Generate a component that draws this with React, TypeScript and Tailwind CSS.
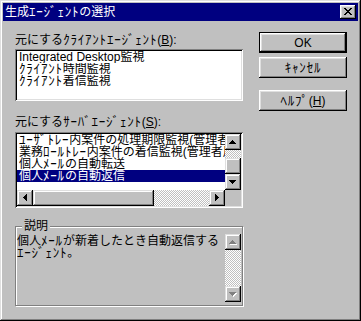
import React from 'react';

const raised =
  'shadow-[inset_-1px_-1px_#000,inset_1px_1px_#dfdfdf,inset_-2px_-2px_#808080,inset_2px_2px_#fff]';
const button =
  'shadow-[inset_-1px_-1px_#000,inset_1px_1px_#fff,inset_-2px_-2px_#808080,inset_2px_2px_#dfdfdf]';
const sunken =
  'shadow-[inset_1px_1px_#808080,inset_-1px_-1px_#fff,inset_2px_2px_#000,inset_-2px_-2px_#dfdfdf]';
const dither =
  '[background-image:repeating-conic-gradient(#c0c0c0_0_25%,#fff_0_50%)] [background-size:2px_2px]';

type Dir = 'up' | 'down' | 'left' | 'right';

const arrowPaths: Record<Dir, { w: number; h: number; d: string }> = {
  up: { w: 7, h: 4, d: 'M3 0h1v1H3zM2 1h3v1H2zM1 2h5v1H1zM0 3h7v1H0z' },
  down: { w: 7, h: 4, d: 'M0 0h7v1H0zM1 1h5v1H1zM2 2h3v1H2zM3 3h1v1H3z' },
  left: { w: 4, h: 7, d: 'M0 3h1v1H0zM1 2h1v3H1zM2 1h1v5H2zM3 0h1v7H3z' },
  right: { w: 4, h: 7, d: 'M0 0h1v7H0zM1 1h1v5H1zM2 2h1v3H2zM3 3h1v1H3z' },
};

function ScrollButton({ dir, disabled = false }: { dir: Dir; disabled?: boolean }) {
  const a = arrowPaths[dir];
  return (
    <div className={`w-[16px] h-[16px] shrink-0 bg-[#c0c0c0] flex items-center justify-center ${raised}`}>
      <svg width={a.w + 1} height={a.h + 1} viewBox={`0 0 ${a.w + 1} ${a.h + 1}`} shapeRendering="crispEdges">
        {disabled ? (
          <>
            <path d={a.d} fill="#fff" transform="translate(1 1)" />
            <path d={a.d} fill="#808080" />
          </>
        ) : (
          <path d={a.d} fill="#000" />
        )}
      </svg>
    </div>
  );
}

// half-width katakana come out small and narrow in Noto, so bump them a little
function Jp({ text }: { text: string }) {
  const parts = text.split(/([\uFF61-\uFF9F]+)/);
  return (
    <>
      {parts.map((p, i) =>
        i % 2 ? (
          <span key={i} className="text-[13px] tracking-[0.8px]">
            {p}
          </span>
        ) : (
          p
        )
      )}
    </>
  );
}

function Mnemonic({ text, ch, after = '' }: { text: string; ch: string; after?: string }) {
  return (
    <>
      <Jp text={text} />(<span className="underline underline-offset-[1px]">{ch}</span>){after}
    </>
  );
}

const clientAgents = ['Integrated Desktop監視', 'ｸﾗｲｱﾝﾄ時間監視', 'ｸﾗｲｱﾝﾄ着信監視'];
const serverAgents = [
  'ﾕｰｻﾞﾄﾚｰ内案件の処理期限監視(管理者用)',
  '業務ﾛｰﾙﾄﾚｰ内案件の着信監視(管理者用)',
  '個人ﾒｰﾙの自動転送',
  '個人ﾒｰﾙの自動返信',
];

export default function App() {
  const selected = 3;

  return (
    <div
      className={`w-[361px] h-[321px] bg-[#c0c0c0] p-[3px] flex flex-col text-[12px] text-black [font-family:'Liberation_Sans','Noto_Sans_CJK_JP',sans-serif] shadow-[inset_-1px_-1px_#000,inset_1px_1px_#dfdfdf,inset_-2px_-2px_#808080,inset_2px_2px_#fff]`}
    >
      {/* title bar */}
      <div className="h-[18px] shrink-0 bg-[#000080] flex items-center justify-between pl-[2px] pr-[2px]">
        <span className="text-white leading-[18px]">
          <Jp text="生成ｴｰｼﾞｪﾝﾄの選択" />
        </span>
        <div className={`w-[16px] h-[14px] bg-[#c0c0c0] flex items-center justify-center pr-[1px] pb-[1px] ${button}`}>
          <svg width="8" height="7" viewBox="0 0 8 7" shapeRendering="crispEdges">
            <path
              d="M0 0h2v1H0zM6 0h2v1H6zM1 1h2v1H1zM5 1h2v1H5zM2 2h4v1H2zM3 3h2v1H3zM2 4h4v1H2zM1 5h2v1H1zM5 5h2v1H5zM0 6h2v1H0zM6 6h2v1H6z"
              fill="#000"
            />
          </svg>
        </div>
      </div>

      <div className="flex pl-[12px] gap-[16px]">
        {/* left column */}
        <div className="w-[228px] pt-[12px] flex flex-col">
          <div className="h-[16px] leading-[14px] whitespace-nowrap">
            <Mnemonic text="元にするｸﾗｲｱﾝﾄｴｰｼﾞｪﾝﾄ" ch="B" after=":" />
          </div>
          <div className={`h-[52px] bg-white p-[2px] ${sunken}`}>
            {clientAgents.map((name) => (
              <div key={name} className="h-[12px] leading-[12px] pl-[2px] whitespace-nowrap overflow-hidden">
                <Jp text={name} />
              </div>
            ))}
          </div>

          <div className="mt-[14px] h-[17px] leading-[14px] whitespace-nowrap">
            <Mnemonic text="元にするｻｰﾊﾞｴｰｼﾞｪﾝﾄ" ch="S" after=":" />
          </div>
          <div className={`h-[76px] bg-white p-[2px] flex flex-col ${sunken}`}>
            <div className="flex h-[56px]">
              <div className="flex-1 overflow-hidden">
                {serverAgents.map((name, i) => (
                  <div
                    key={name}
                    className={`h-[12px] leading-[12px] pl-[2px] whitespace-nowrap ${
                      i === selected ? 'bg-[#000080] text-white' : ''
                    }`}
                  >
                    <Jp text={name} />
                  </div>
                ))}
              </div>
              <div className="w-[16px] flex flex-col">
                <ScrollButton dir="up" />
                <div className={`h-[8px] ${dither}`} />
                <div className={`h-[16px] bg-[#c0c0c0] ${raised}`} />
                <ScrollButton dir="down" />
              </div>
            </div>
            <div className="flex h-[16px]">
              <div className="flex-1 flex">
                <ScrollButton dir="left" />
                <div className={`w-[121px] bg-[#c0c0c0] ${raised}`} />
                <div className={`flex-1 ${dither}`} />
                <ScrollButton dir="right" />
              </div>
              <div className="w-[16px] bg-[#c0c0c0]" />
            </div>
          </div>

          <div className="relative mt-[18px] h-[80px] border border-[#808080] pt-[7px] pl-[1px] pr-[1px] shadow-[1px_1px_#fff,inset_1px_1px_#fff]">
            <span className="absolute -top-[8px] left-[6px] px-[2px] leading-[14px] bg-[#c0c0c0]">説明</span>
            <div className="h-[68px] flex">
              <div className="flex-1 leading-[12px] pt-[1px]">
                <Jp text="個人ﾒｰﾙが新着したとき自動返信する" />
                <br />
                <Jp text="ｴｰｼﾞｪﾝﾄ。" />
              </div>
              <div className="w-[16px] flex flex-col">
                <ScrollButton dir="up" disabled />
                <div className={`flex-1 ${dither}`} />
                <ScrollButton dir="down" disabled />
              </div>
            </div>
          </div>
        </div>

        {/* buttons */}
        <div className="w-[88px] pt-[11px] flex flex-col">
          <div className={`h-[21px] border border-black bg-[#c0c0c0] flex items-center justify-center ${button}`}>OK</div>
          <div className={`mt-[4px] h-[21px] bg-[#c0c0c0] flex items-center justify-center ${button}`}>
            <Jp text="ｷｬﾝｾﾙ" />
          </div>
          <div className={`mt-[12px] h-[21px] bg-[#c0c0c0] flex items-center justify-center ${button}`}>
            <Mnemonic text="ﾍﾙﾌﾟ" ch="H" />
          </div>
        </div>
      </div>
    </div>
  );
}
